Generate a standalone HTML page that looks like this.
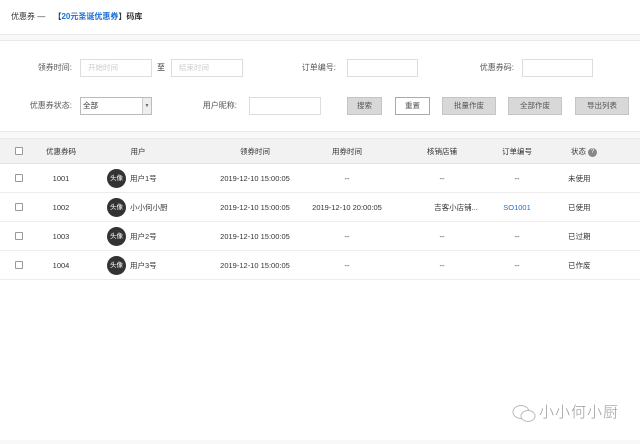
<!DOCTYPE html>
<html><head><meta charset="utf-8"><style>
*{margin:0;padding:0;box-sizing:border-box}
body{width:640px;height:444px;background:#f8f8f8;font-family:"Liberation Sans","Noto Sans CJK SC",sans-serif;font-size:8px;color:#333;position:relative;overflow:hidden}
.p{position:absolute;background:#fff;left:0;width:640px}
.a{position:absolute;white-space:nowrap}
.in{position:absolute;border:1px solid #ddd;background:#fff;height:18px;color:#ccc;font-size:7.5px;line-height:16px;padding-left:7px}
.lb{position:absolute;text-align:right;color:#555;line-height:12px}
.bt{position:absolute;height:18px;background:#d8d8d8;border:1px solid #c4c4c4;text-align:center;line-height:16px;color:#555;font-size:7.5px}
.row{position:absolute;left:0;width:640px;height:29px;border-bottom:1px solid #ececec}
.c{position:absolute;top:0;line-height:29px;transform:translateX(-50%);white-space:nowrap;color:#333;font-size:7.5px}
.s{position:absolute;top:0;left:568px;line-height:29px;white-space:nowrap;color:#333;font-size:7.5px}
.cb{position:absolute;left:15px;top:10px;width:8px;height:8px;border:1px solid #999;border-radius:1px;background:#fff}
.av{position:absolute;left:107px;top:5px;width:19px;height:19px;border-radius:50%;background:#333;color:#fff;font-size:6.5px;line-height:19px;text-align:center}
.un{position:absolute;left:130px;top:0;line-height:29px;font-size:7.5px}
</style></head><body>
<div class="p" style="top:0;height:35px;border-bottom:1px solid #eaeaea">
<div class="a" style="left:11px;top:11px;font-size:8px;line-height:12px">优惠券 — <b style="margin-left:6px">【<span style="color:#1a6fd6">20元圣诞优惠券</span>】码库</b></div>
</div>
<div class="p" style="top:40px;height:92px;border-top:1px solid #eaeaea;border-bottom:1px solid #eaeaea">
<div class="lb" style="left:0;width:72px;top:21px">领券时间:</div>
<div class="in" style="left:80px;top:18px;width:72px">开始时间</div>
<div class="a" style="left:157px;top:21px;line-height:12px">至</div>
<div class="in" style="left:171px;top:18px;width:72px">结束时间</div>
<div class="lb" style="left:260px;width:76px;top:21px">订单编号:</div>
<div class="in" style="left:347px;top:18px;width:71px"></div>
<div class="lb" style="left:440px;width:74px;top:21px">优惠券码:</div>
<div class="in" style="left:522px;top:18px;width:71px"></div>
<div class="lb" style="left:0;width:72px;top:59px">优惠券状态:</div>
<div class="in" style="left:80px;top:56px;width:72px;color:#333;padding-left:2px;border-color:#bbb">全部<span style="position:absolute;right:0;top:0;width:9px;height:16px;background:#eee;border-left:1px solid #ccc;font-size:5px;text-align:center;color:#666">▼</span></div>
<div class="lb" style="left:170px;width:67px;top:59px">用户昵称:</div>
<div class="in" style="left:249px;top:56px;width:72px"></div>
<div class="bt" style="left:347px;top:56px;width:35px">搜索</div>
<div class="bt" style="left:395px;top:56px;width:35px;background:#fff;border-color:#aaa">重置</div>
<div class="bt" style="left:442px;top:56px;width:54px">批量作废</div>
<div class="bt" style="left:508px;top:56px;width:54px">全部作废</div>
<div class="bt" style="left:575px;top:56px;width:54px">导出列表</div>
</div>
<div class="p" style="top:138px;height:302px;border-top:1px solid #eaeaea">
<div class="row" style="top:0;height:25px;background:#f2f2f2;border-bottom:1px solid #e4e4e4">
<div class="cb" style="top:8px"></div>
<div class="c" style="left:61px;line-height:25px">优惠券码</div>
<div class="c" style="left:138px;line-height:25px">用户</div>
<div class="c" style="left:255px;line-height:25px">领券时间</div>
<div class="c" style="left:347px;line-height:25px">用券时间</div>
<div class="c" style="left:442px;line-height:25px">核销店铺</div>
<div class="c" style="left:517px;line-height:25px">订单编号</div>
<div class="s" style="line-height:25px;left:571px">状态 <span style="display:inline-block;width:9px;height:9px;border-radius:50%;background:#888;color:#fff;font-size:6px;line-height:9px;text-align:center;vertical-align:middle">?</span></div>
</div>
<div class="row" style="top:25px"><div class="cb"></div><div class="c" style="left:61px">1001</div><div class="av">头像</div><div class="un">用户1号</div><div class="c" style="left:255px">2019-12-10 15:00:05</div><div class="c" style="left:347px">--</div><div class="c" style="left:442px">--</div><div class="c" style="left:517px">--</div><div class="s">未使用</div></div>
<div class="row" style="top:54px"><div class="cb"></div><div class="c" style="left:61px">1002</div><div class="av">头像</div><div class="un">小小何小厨</div><div class="c" style="left:255px">2019-12-10 15:00:05</div><div class="c" style="left:347px">2019-12-10 20:00:05</div><div class="c" style="left:456px">吉客小店铺...</div><div class="c" style="left:517px;color:#1a6fd6">SO1001</div><div class="s">已使用</div></div>
<div class="row" style="top:83px"><div class="cb"></div><div class="c" style="left:61px">1003</div><div class="av">头像</div><div class="un">用户2号</div><div class="c" style="left:255px">2019-12-10 15:00:05</div><div class="c" style="left:347px">--</div><div class="c" style="left:442px">--</div><div class="c" style="left:517px">--</div><div class="s">已过期</div></div>
<div class="row" style="top:112px"><div class="cb"></div><div class="c" style="left:61px">1004</div><div class="av">头像</div><div class="un">用户3号</div><div class="c" style="left:255px">2019-12-10 15:00:05</div><div class="c" style="left:347px">--</div><div class="c" style="left:442px">--</div><div class="c" style="left:517px">--</div><div class="s">已作废</div></div>
</div>
<svg class="a" style="left:511px;top:404px" width="28" height="20" viewBox="0 0 28 20"><ellipse cx="10" cy="8" rx="8" ry="6.5" fill="none" stroke="#bbb" stroke-width="1"/><ellipse cx="17" cy="12" rx="7" ry="5.5" fill="#fff" stroke="#bbb" stroke-width="1"/></svg>
<div class="a" style="left:539px;top:403px;font-size:15px;color:#999;letter-spacing:1px;line-height:20px;font-weight:300">小小何小厨</div>
</body></html>
